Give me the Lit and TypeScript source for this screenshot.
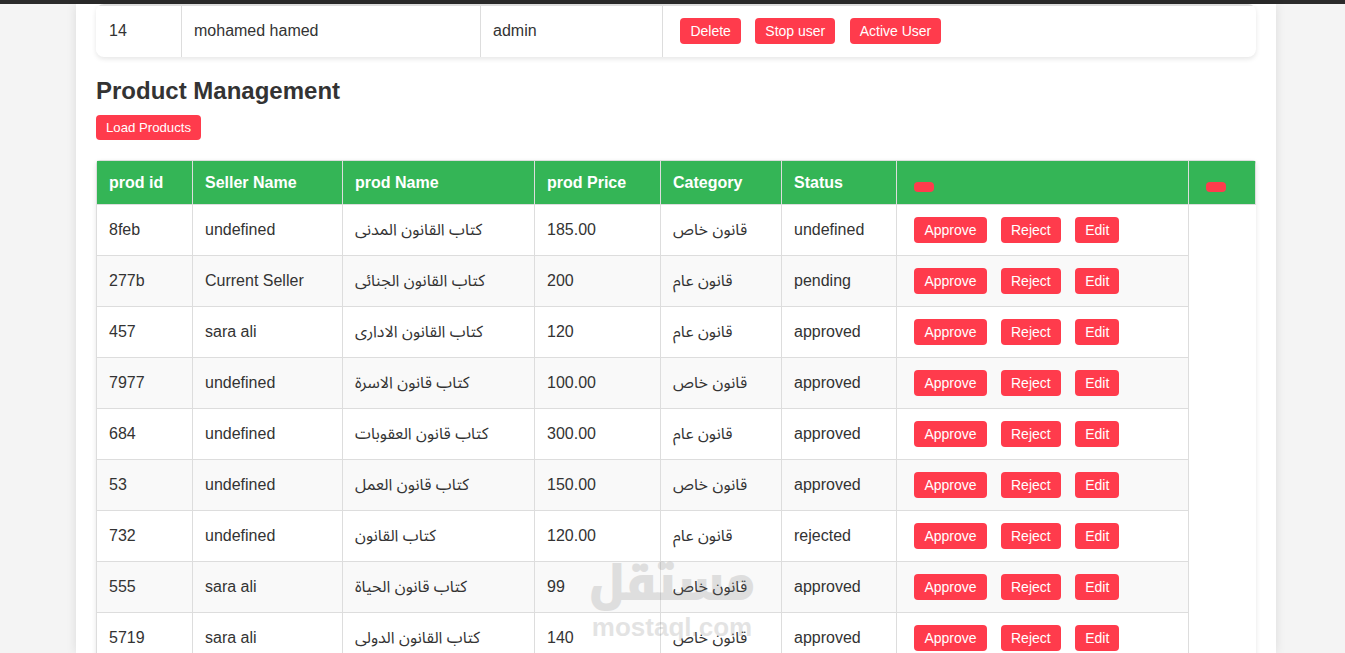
import { LitElement, html, css } from "lit";
import { customElement } from "lit/decorators.js";

const products = [
  ["8feb", "undefined", "كتاب القانون المدنى", "185.00", "قانون خاص", "undefined"],
  ["277b", "Current Seller", "كتاب القانون الجنائى", "200", "قانون عام", "pending"],
  ["457", "sara ali", "كتاب القانون الادارى", "120", "قانون عام", "approved"],
  ["7977", "undefined", "كتاب قانون الاسرة", "100.00", "قانون خاص", "approved"],
  ["684", "undefined", "كتاب قانون العقوبات", "300.00", "قانون عام", "approved"],
  ["53", "undefined", "كتاب قانون العمل", "150.00", "قانون خاص", "approved"],
  ["732", "undefined", "كتاب القانون", "120.00", "قانون عام", "rejected"],
  ["555", "sara ali", "كتاب قانون الحياة", "99", "قانون خاص", "approved"],
  ["5719", "sara ali", "كتاب القانون الدولى", "140", "قانون خاص", "approved"],
];
const widths = [96, 150, 192, 126, 121, 115, 292, 67];
const userWidths = [85, 299, 182, 594];

@customElement("app-root")
export class AppRoot extends LitElement {
  static styles = css`
    :host {
      display: block;
      height: 653px;
      overflow: hidden;
      position: relative;
      background: #f4f4f4;
      font-family: "Liberation Sans", "Noto Sans Arabic", Arial, sans-serif;
      color: #333;
      font-size: 16px;
    }
    .topbar { height: 4px; background: #2b2b2b; }
    .container {
      width: 1160px;
      margin: 0 0 0 76px;
      padding: 0 20px;
      background: #fff;
      box-shadow: 0 0 10px rgba(0, 0, 0, 0.1);
      height: 649px;
      overflow: hidden;
    }
    .card {
      border-radius: 8px;
      overflow: hidden;
      box-shadow: 0 2px 5px rgba(0, 0, 0, 0.1);
      background: #fff;
    }
    .card.table-card { border-radius: 4px; margin-top: 20px; }
    table {
      width: 100%;
      border-collapse: collapse;
      table-layout: fixed;
    }
    th, td {
      border: 1px solid #ddd;
      padding: 12px;
      text-align: left;
      line-height: 18px;
    }
    .users td { border-width: 2px 1px 0; height: 25px; padding-bottom: 14px; }
    .users td:first-child { border-left: 1px solid #fff; }
    .users td:last-child { border-right: 1px solid #fff; }
    th {
      background: #34b556;
      color: #fff;
      font-weight: 700;
      height: 19px;
    }
    .products tbody tr:nth-child(even) td { background: #f9f9f9; }
    .products tbody td { height: 26px; }
    .products tbody tr td.spacer { border: 0; border-left: 1px solid #ddd; background: #fff; }
    h2 {
      margin: 20px 0 10px;
      font-size: 24px;
      line-height: 28px;
      font-weight: 700;
      color: #333;
    }
    button {
      font-family: "Liberation Sans", Arial, sans-serif;
      background: #ff3b4c;
      color: #fff;
      border: 0;
      border-radius: 4px;
      font-size: 14px;
      line-height: 16px;
      padding: 5px 10px;
      margin: 5px;
    }
    .load {
      display: block;
      margin: 0;
      font-size: 13.2px;
      line-height: 15px;
    }
    th button { display: block; height: 10px; width: 20px; padding: 0; margin: 8px 5px 0; }
    td.actions { padding-top: 6px; padding-bottom: 6px; padding-left: 12.4px; }
    .users td.actions { padding-bottom: 8px; }
    .mark {
      position: absolute;
      left: 572px;
      top: 552px;
      width: 200px;
      text-align: center;
      color: #787878;
      opacity: 0.2;
      font-weight: 700;
      pointer-events: none;
    }
    .mark .ar {
      font-family: "Noto Kufi Arabic", "Noto Sans Arabic", sans-serif;
      font-size: 46px;
      line-height: 64px;
      -webkit-text-stroke: 2px #787878;
    }
    .mark .en { font-size: 26px; line-height: 28px; margin-top: -3px; }
  `;

  render() {
    return html`
      <div class="topbar"></div>
      <div class="container">
        <div class="card">
          <table class="users">
            <colgroup>${userWidths.map((w) => html`<col style="width:${w}px" />`)}</colgroup>
            <tr>
              <td>14</td>
              <td>mohamed hamed</td>
              <td>admin</td>
              <td class="actions">
                <button>Delete</button>
                <button>Stop user</button>
                <button>Active User</button>
              </td>
            </tr>
          </table>
        </div>
        <h2>Product Management</h2>
        <button class="load">Load Products</button>
        <div class="card table-card">
          <table class="products">
            <colgroup>${widths.map((w) => html`<col style="width:${w}px" />`)}</colgroup>
            <thead>
              <tr>
                <th>prod id</th>
                <th>Seller Name</th>
                <th>prod Name</th>
                <th>prod Price</th>
                <th>Category</th>
                <th>Status</th>
                <th><button></button></th>
                <th><button></button></th>
              </tr>
            </thead>
            <tbody>
              ${products.map(
                (p) => html`<tr>
                  ${p.map((c) => html`<td>${c}</td>`)}
                  <td class="actions">
                    <button>Approve</button>
                    <button>Reject</button>
                    <button>Edit</button>
                  </td>
                  <td class="spacer"></td>
                </tr>`
              )}
            </tbody>
          </table>
        </div>
      </div>
      <div class="mark">
        <div class="ar">مستقل</div>
        <div class="en">mostaql.com</div>
      </div>
    `;
  }
}
